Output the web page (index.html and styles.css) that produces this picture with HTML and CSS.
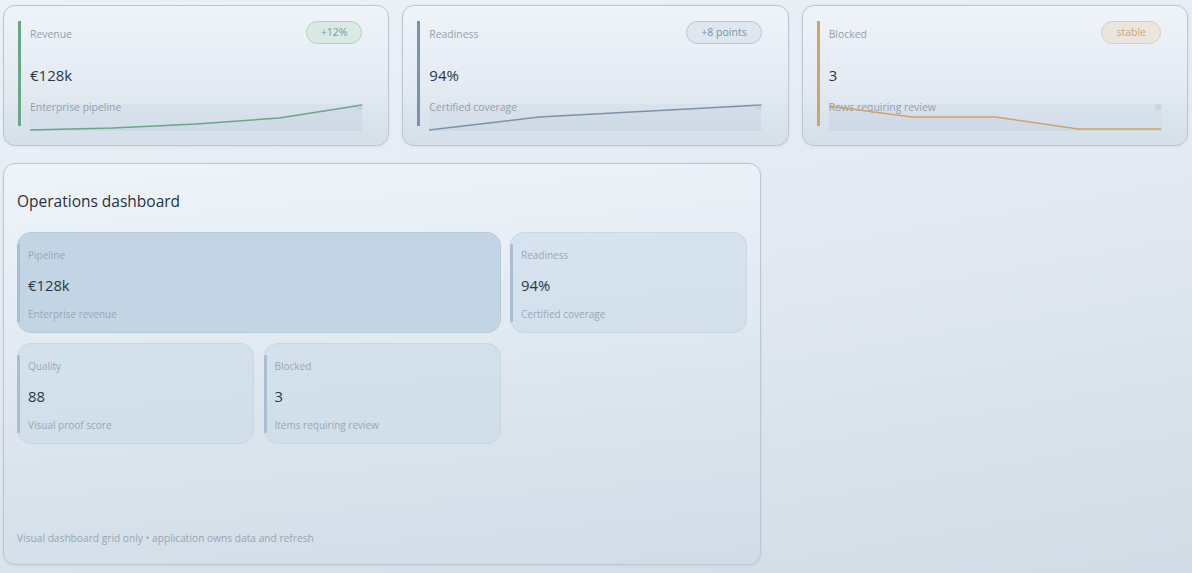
FILE: index.html
```html
<!DOCTYPE html>
<html lang="en">
<head>
  <meta charset="UTF-8" />
  <meta name="viewport" content="width=device-width, initial-scale=1.0" />
  <title>Operations dashboard</title>
  <link rel="stylesheet" href="styles.css">
</head>
<body>

<div class="page">

  <div class="kpi-card kpi-green">
    <div class="kpi-inner">
      <div class="kpi-head">
        <span class="kpi-label">Revenue</span>
        <span class="kpi-badge">+12%</span>
      </div>
      <div class="kpi-value">€128k</div>
      <div class="kpi-sub">Enterprise pipeline</div>
    </div>
    <svg class="spark" viewBox="0 0 332 27" preserveAspectRatio="none">
      <rect x="0" y="0" width="332" height="27" class="spark-bg" />
      <polygon class="spark-area" points="0,26 83,24 166,20 249,14 332,1 332,27 0,27" />
      <polyline class="spark-line" points="0,26 83,24 166,20 249,14 332,1" />
      <rect x="326" y="0" width="6" height="6" rx="1.5" class="spark-dot" />
    </svg>
  </div>

  <div class="kpi-card kpi-slate">
    <div class="kpi-inner">
      <div class="kpi-head">
        <span class="kpi-label">Readiness</span>
        <span class="kpi-badge">+8 points</span>
      </div>
      <div class="kpi-value">94%</div>
      <div class="kpi-sub">Certified coverage</div>
    </div>
    <svg class="spark" viewBox="0 0 332 27" preserveAspectRatio="none">
      <rect x="0" y="0" width="332" height="27" class="spark-bg" />
      <polygon class="spark-area" points="0,26 110,13 221,7 332,1 332,27 0,27" />
      <polyline class="spark-line" points="0,26 110,13 221,7 332,1" />
      <rect x="326" y="0" width="6" height="6" rx="1.5" class="spark-dot" />
    </svg>
  </div>

  <div class="kpi-card kpi-tan">
    <div class="kpi-inner">
      <div class="kpi-head">
        <span class="kpi-label">Blocked</span>
        <span class="kpi-badge">stable</span>
      </div>
      <div class="kpi-value">3</div>
      <div class="kpi-sub">Rows requiring review</div>
    </div>
    <svg class="spark" viewBox="0 0 332 27" preserveAspectRatio="none">
      <rect x="0" y="0" width="332" height="27" class="spark-bg" />
      <polygon class="spark-area" points="0,2 83,13 166,13 249,25 332,25 332,27 0,27" />
      <polyline class="spark-line" points="0,2 83,13 166,13 249,25 332,25" />
      <rect x="326" y="0" width="6" height="6" rx="1.5" class="spark-dot" />
    </svg>
  </div>

  <div class="ops-panel">
    <h1 class="ops-title">Operations dashboard</h1>
    <div class="ops-grid">
      <div class="tile tile-wide tile-active">
        <div class="tile-label">Pipeline</div>
        <div class="tile-value">€128k</div>
        <div class="tile-sub">Enterprise revenue</div>
      </div>
      <div class="tile">
        <div class="tile-label">Readiness</div>
        <div class="tile-value">94%</div>
        <div class="tile-sub">Certified coverage</div>
      </div>
      <div class="tile">
        <div class="tile-label">Quality</div>
        <div class="tile-value">88</div>
        <div class="tile-sub">Visual proof score</div>
      </div>
      <div class="tile">
        <div class="tile-label">Blocked</div>
        <div class="tile-value">3</div>
        <div class="tile-sub">Items requiring review</div>
      </div>
    </div>
    <div class="ops-foot">Visual dashboard grid only • application owns data and refresh</div>
  </div>

</div>

</body>
</html>
```

FILE: styles.css
```css
:root {
  --text-color: #2a3846;
  --muted: #949fab;
  --line: #b9c6d3;
  --green: #6aa688;
  --slate: #7b92aa;
  --tan: #cfa566;
}
html, body {
  height: 100%;
}
body {
  margin: 0;
  font-family: "Segoe UI", "Open Sans", "Noto Sans", sans-serif;
  color: var(--text-color);
  background: linear-gradient(170deg, #edf2f8 0%, #e2e9f1 50%, #d1dce6 100%);
}
.page {
  display: grid;
  grid-template-columns: repeat(3, 1fr);
  grid-template-rows: 141px 402px;
  column-gap: 13px;
  row-gap: 17px;
  padding: 5px 4px 0 3px;
}

/* top KPI cards */
.kpi-card {
  position: relative;
  background: linear-gradient(180deg, #eff4fa 0%, #e4ebf3 55%, #d4dfe9 100%);
  border: 1px solid var(--line);
  border-radius: 12px;
  padding: 17px 26px 17px 14px;
  box-shadow: 0 1px 3px rgba(60, 80, 100, 0.08);
}
.kpi-inner {
  border-left: 3px solid var(--accent);
  padding-left: 9px;
  height: 105px;
  box-sizing: border-box;
}
.kpi-head {
  display: flex;
  justify-content: space-between;
  align-items: center;
  height: 23px;
  margin-top: -2px;
}
.kpi-label {
  font-size: 10.4px;
  color: var(--muted);
  padding-top: 2px;
}
.kpi-badge {
  font-size: 10.5px;
  line-height: 21px;
  padding: 0 14px;
  border-radius: 12px;
  border: 1px solid var(--badge-border);
  background: var(--badge-bg);
  color: var(--badge-text);
  text-align: center;
}
.kpi-value {
  font-size: 15px;
  line-height: 20px;
  margin-top: 21px;
  color: var(--text-color);
}
.kpi-sub {
  font-size: 10.4px;
  line-height: 14px;
  margin-top: 15px;
  color: var(--muted);
}
.kpi-green { --accent: var(--green); --badge-bg: #dbe9e4; --badge-border: #b1d0c1; --badge-text: #71a48a; }
.kpi-slate { --accent: var(--slate); --badge-bg: #dee6ee; --badge-border: #b9c7d5; --badge-text: #7d92a8; }
.kpi-tan { --accent: var(--tan); --badge-bg: #ebe6dd; --badge-border: #ddcdae; --badge-text: #cba76f; }

.spark {
  position: absolute;
  left: 26px;
  right: 26px;
  bottom: 14px;
  width: calc(100% - 52px);
  height: 27px;
  overflow: visible;
}
.spark-bg {
  fill: rgba(150, 172, 192, 0.07);
}
.spark-area {
  fill: rgba(140, 162, 184, 0.06);
}
.spark-line {
  fill: none;
  stroke: var(--accent);
  stroke-width: 1.4;
  vector-effect: non-scaling-stroke;
}
.spark-dot {
  fill: rgba(170, 184, 198, 0.3);
}

/* operations panel */
.ops-panel {
  grid-column: span 2;
  max-width: 758px;
  box-sizing: border-box;
  display: flex;
  flex-direction: column;
  background: linear-gradient(175deg, #eff4fa 0%, #e1e9f1 45%, #d0dce7 100%);
  border: 1px solid var(--line);
  border-radius: 12px;
  padding: 27px 13px 19px;
  box-shadow: 0 1px 3px rgba(60, 80, 100, 0.08);
}
.ops-title {
  margin: 0;
  font-size: 15.5px;
  line-height: 20px;
  font-weight: 500;
  color: #27333f;
}
.ops-grid {
  display: grid;
  grid-template-columns: repeat(3, 1fr);
  grid-auto-rows: 101px;
  column-gap: 9.5px;
  row-gap: 10px;
  margin-top: 21px;
}
.tile {
  position: relative;
  background: rgba(196, 214, 230, 0.45);
  border: 1px solid #c8d6e3;
  border-radius: 14px;
  padding: 15px 10px 0 10px;
}
.tile::before {
  content: "";
  position: absolute;
  left: -1px;
  top: 11px;
  bottom: 10px;
  width: 3px;
  background: #a9bed4;
  border-radius: 1px;
}
.tile-wide {
  grid-column: span 2;
}
.tile-active {
  background: #c3d4e5;
  border-color: #b7cadc;
}
.tile-label {
  font-size: 10px;
  line-height: 14px;
  color: #9aa7b4;
}
.tile-value {
  font-size: 14.8px;
  line-height: 20px;
  margin-top: 13px;
  color: var(--text-color);
}
.tile-sub {
  font-size: 10px;
  line-height: 14px;
  margin-top: 12px;
  color: #9aa7b4;
}
.ops-foot {
  margin-top: auto;
  font-size: 10.2px;
  line-height: 14px;
  color: #98a4b1;
}
```
